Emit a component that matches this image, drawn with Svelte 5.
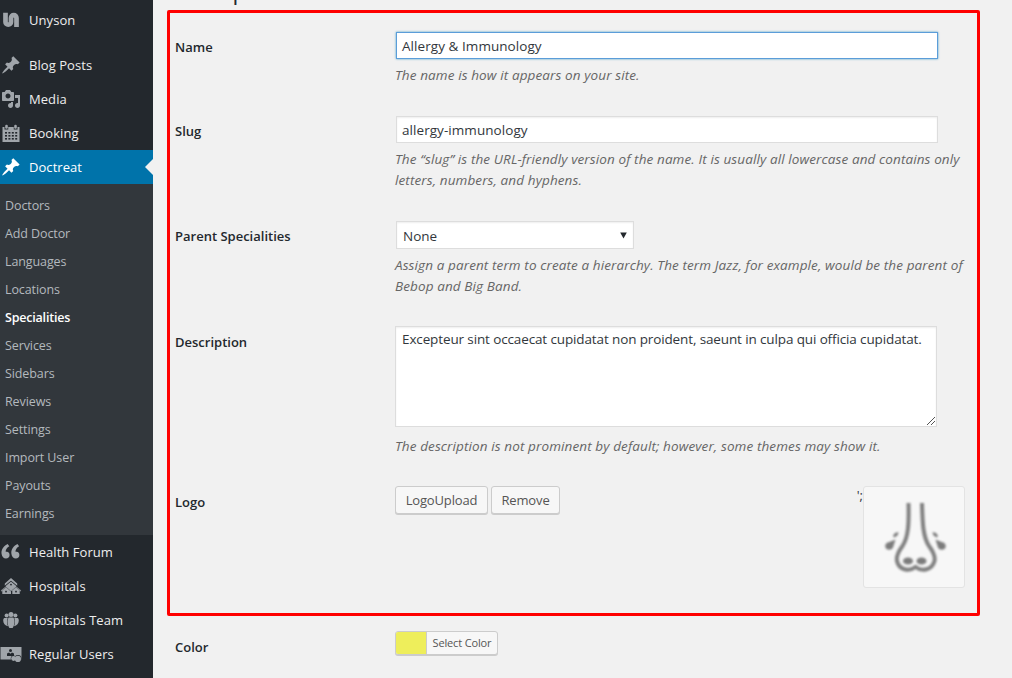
<script>
  const quote = 'M9.49 13.22c0-.74-.2-1.38-.61-1.9-.62-.78-1.83-.88-2.53-.72-.29-1.65 1.11-3.75 2.92-4.65L7.88 4c-2.73 1.3-5.42 4.28-4.96 8.05C3.21 14.43 4.59 16 6.54 16c.85 0 1.56-.25 2.12-.75s.83-1.18.83-2.03zm8.05 0c0-.74-.2-1.38-.61-1.9-.63-.78-1.83-.88-2.53-.72-.29-1.65 1.11-3.75 2.92-4.65L15.93 4c-2.73 1.3-5.41 4.28-4.95 8.05.28 2.38 1.66 3.95 3.61 3.95.85 0 1.56-.25 2.12-.75s.83-1.18.83-2.03z';
  const pin = 'M10.44 3.02l1.82-1.82 6.36 6.35-1.83 1.82c-1.05-.68-2.48-.57-3.41.36l-.75.75c-.92.93-1.04 2.35-.35 3.41l-1.83 1.82-2.41-2.41-2.8 2.79c-.42.42-3.38 2.71-3.8 2.29s1.86-3.39 2.28-3.81l2.79-2.79L4.1 9.36l1.83-1.82c1.05.69 2.48.57 3.4-.36l.75-.75c.93-.92 1.05-2.35.36-3.41z';
  const media = 'M13 11V4c0-.55-.45-1-1-1h-1.67L9 1H5L3.67 3H2c-.55 0-1 .45-1 1v7c0 .55.45 1 1 1h10c.55 0 1-.45 1-1zM7 4.5c1.38 0 2.5 1.12 2.5 2.5S8.38 9.5 7 9.5 4.5 8.38 4.5 7 5.62 4.5 7 4.5zM14 6h5v10.5c0 1.38-1.12 2.5-2.5 2.5S14 17.88 14 16.5s1.12-2.5 2.5-2.5c.17 0 .34.02.5.05V9h-3V6zm-4 8.05V13h2v3.5c0 1.38-1.12 2.5-2.5 2.5S7 17.88 7 16.5 8.12 14 9.5 14c.17 0 .34.02.5.05z';
  const top = [['unyson', 'Unyson'], ['pin', 'Blog Posts'], ['media', 'Media'], ['calendar', 'Booking'], ['pin', 'Doctreat']];
  const bottom = [['quote', 'Health Forum'], ['houses', 'Hospitals'], ['team', 'Hospitals Team'], ['users', 'Regular Users']];
  const sub = ['Doctors', 'Add Doctor', 'Languages', 'Locations', 'Specialities', 'Services', 'Sidebars', 'Reviews', 'Settings', 'Import User', 'Payouts', 'Earnings'];
</script>

{#snippet icon(name)}
  <svg class="icon" width="24" height="34" viewBox="0 0 24 34" fill="currentColor" aria-hidden="true">
    {#if name === 'unyson'}
      <path d="M5.500 9.700v9.200a2.750 2.750 0 0 0 5.500 0v-4a2.750 2.750 0 0 1 5.500 0V24" fill="none" stroke="currentColor" stroke-width="4.700" />
    {:else if name === 'pin'}
      <path transform="translate(1 7)" d={pin} />
    {:else if name === 'media'}
      <path transform="translate(1 7)" d={media} />
    {:else if name === 'calendar'}
      <path d="M2.500 11h2v2.500h4V11h5v2.500h4V11h2v15h-17z" />
      <rect x="5.200" y="8.700" width="2.600" height="4" rx="1.200" />
      <rect x="14.200" y="8.700" width="2.600" height="4" rx="1.200" />
      <rect x="8.500" y="11" width="5" height="3" />
      <g fill="#23282d">
        {#each [16, 19, 22] as y}
          {#each [5, 8.4, 11.8, 15.2] as x}
            <rect {x} {y} width="2" height="1.600" />
          {/each}
        {/each}
      </g>
    {:else if name === 'quote'}
      <path transform="translate(-2 4.200) scale(1.220 1.200)" d={quote} />
    {:else if name === 'houses'}
      <path d="M11 9l6.200 5.600v2.200L11 11.800l-6.200 5v-2.200z" />
      <path d="M11 12.400l5 4.200v2.400L11 22l-5-3v-2.400z" />
      <path d="M6 17.200l5 4 5-4 5.200 4.300-.8 1.100-.7-.5V25h-7.400v-3l-1.300 0V25H2.300v-2.900l-.7.5-.8-1.100z" />
      <g fill="#23282d">
        <circle cx="11" cy="15.600" r=".9" />
        <rect x="5.200" y="21.800" width="1.600" height="1.600" />
        <rect x="15.200" y="21.800" width="1.600" height="1.600" />
      </g>
      <path d="M1.400 21.800L6 18.200l5 4 5-4 4.600 3.600M4.800 17.400L11 12.200l6.200 5.200" fill="none" stroke="#23282d" stroke-width=".4" />
    {:else if name === 'team'}
      <circle cx="6.600" cy="12.500" r="2" />
      <circle cx="15.400" cy="12.500" r="2" />
      <circle cx="11" cy="11.500" r="2.500" />
      <path d="M4.200 15h3.500c-1.100 2.600-.9 5.500.3 8.300C5 22.800 3.200 20.500 3.200 17.500c0-1.200.3-2.100 1-2.500zM17.800 15h-3.500c1.100 2.600.9 5.500-.3 8.300 2.900-.5 4.800-2.800 4.800-5.800 0-1.200-.3-2.100-1-2.500z" />
      <path d="M8.600 14.600h4.800c1.900 3 1.300 7.400-.8 10.400H9.400C7.300 22 6.700 17.600 8.600 14.600z" />
    {:else}
      <path d="M.5 10h21v12.500H.5z" />
      <g fill="#23282d">
        <circle cx="10.500" cy="13.500" r="1.500" />
        <path d="M7 19v-2.500l2-1 1.500 1.300 1.500-1.300 2 1V19z" />
        <circle cx="13.600" cy="21.300" r="2.800" />
        <circle cx="18" cy="21.500" r="3.600" />
      </g>
      <circle cx="13.600" cy="21.500" r="2.400" />
      <circle cx="17.900" cy="21.900" r="3.100" />
    {/if}
  </svg>
{/snippet}

<div class="page">
  <nav class="sidebar">
    {#each top as [name, label], i}
      <a class="item" class:first={i === 0} class:active={i === 4}>{@render icon(name)}<span>{label}</span></a>
    {/each}
    <div class="sub">
      {#each sub as label}
        <a class:current={label === 'Specialities'}>{label}</a>
      {/each}
    </div>
    {#each bottom as [name, label]}
      <a class="item">{@render icon(name)}<span>{label}</span></a>
    {/each}
  </nav>

  <main>
    <h1>Edit Specialities</h1>
    <div class="row name">
      <div class="label">Name</div>
      <div>
        <div class="input focus">Allergy &amp; Immunology</div>
        <p>The name is how it appears on your site.</p>
      </div>
    </div>
    <div class="row slug">
      <div class="label">Slug</div>
      <div>
        <div class="input">allergy-immunology</div>
        <p>The “slug” is the URL-friendly version of the name. It is usually all lowercase and contains only<br />letters, numbers, and hyphens.</p>
      </div>
    </div>
    <div class="row parent">
      <div class="label">Parent Specialities</div>
      <div>
        <div class="input select"><span>None</span>
          <svg width="7" height="7" viewBox="0 0 7 7"><path d="M.2.5h6.600L3.500 6.500z" fill="#23282d" /></svg>
        </div>
        <p>Assign a parent term to create a hierarchy. The term Jazz, for example, would be the parent of<br />Bebop and Big Band.</p>
      </div>
    </div>
    <div class="row desc">
      <div class="label">Description</div>
      <div>
        <div class="input area"><span>Excepteur sint occaecat cupidatat non proident, saeunt in culpa qui officia cupidatat.</span>
          <svg width="10" height="10" viewBox="0 0 10 10"><path d="M1 9l8-8M5 9l4-4" stroke="#555" stroke-width="1" fill="none" /></svg>
        </div>
        <p>The description is not prominent by default; however, some themes may show it.</p>
      </div>
    </div>
    <div class="row logo">
      <div class="label">Logo</div>
      <div class="upload">
        <span class="btn up">LogoUpload</span>
        <span class="btn rm">Remove</span>
        <span class="stray">';</span>
        <div class="preview">
          <svg width="100" height="100" viewBox="0 0 100 100" fill="none" stroke="#808080" stroke-width="4">
            <path d="M44.500 16C45 36 44.500 50 38.500 59C34 65 32 69 33 74C35 83 45 85 51.500 80C58 85 68 83 70.500 74C71.500 69 69.500 65 65 59C59 50 58.500 36 58 16" />
            <g fill="#7c7c7c" stroke="none">
              <ellipse cx="44" cy="74" rx="5" ry="3.600" />
              <ellipse cx="57.500" cy="74" rx="5" ry="3.600" />
              <path d="M31.500 52.500l-2 6.500c-1 5.500-8 4.500-8.200.5-.2-3 2-4 4-4.500z" />
              <path d="M71.500 52.500l2 6.500c1 5.500 8 4.500 8.200.5.2-3-2-4-4-4.500z" />
              <path d="M34.500 45l-.8 3.200-3.200 2.300-1.700-1.500 2.200-3z" />
              <path d="M68.500 45l.8 3.200 3.200 2.300 1.700-1.500-2.200-3z" />
            </g>
          </svg>
        </div>
      </div>
    </div>
    <div class="row color">
      <div class="label">Color</div>
      <div><div class="picker"><i></i><span>Select Color</span></div></div>
    </div>
  </main>
  <div class="highlight"></div>
</div>

<style>
  :global(body) { background: #f1f1f1; overflow: hidden; }
  .page {
    position: relative; display: flex; width: 1012px; height: 678px; overflow: hidden;
    background: #f1f1f1; color: #32373c; font: 13px/20px "Open Sans", "Noto Sans", sans-serif;
  }
  .sidebar { width: 153px; flex: none; background: #23282d; padding-top: 3px; box-sizing: border-box; }
  .item { display: flex; height: 34px; line-height: 34px; color: #eee; white-space: nowrap; letter-spacing: .06px; }
  .item .icon { color: #a0a5aa; flex: none; margin-right: 5px; }
  .item.first { margin-bottom: 11px; }
  .item.active { background: #0073aa; color: #fff; position: relative; }
  .item.active .icon { color: #fff; }
  .item.active::after {
    content: ""; position: absolute; right: 0; top: 9px;
    border: 8px solid transparent; border-left: 0; border-right-color: #f1f1f1;
  }
  .sub { background: #32373c; padding: 8px 5px 7px; }
  .sub a { display: block; height: 28px; line-height: 28px; font-size: 12.5px; letter-spacing: -.1px; color: #b4b9be; }
  .sub a.current { color: #fff; font-weight: 600; letter-spacing: -.2px; }
  main { flex: 1; padding-left: 22px; }
  h1 { margin: -25px 0 0 -2px; height: 57px; font-size: 23px; font-weight: 400; line-height: 30px; color: #23282d; }
  .row { display: grid; grid-template-columns: 220px 590px; }
  .name { height: 84px; }
  .slug, .parent { height: 105px; }
  .desc { height: 160px; }
  .logo { height: 145px; }
  .label { font-weight: 600; color: #23282d; padding-top: 5px; }
  .desc .label, .logo .label, .color .label { padding-top: 6px; }
  .input {
    width: 542px; height: 27px; box-sizing: border-box; border: 1px solid #ddd; background: #fff;
    margin-left: 1px; padding-left: 5px; line-height: 26px; font-size: 13.5px; letter-spacing: .06px; white-space: nowrap;
    box-shadow: inset 0 1px 2px rgba(0, 0, 0, .07);
  }
  .focus { border-color: #5b9dd9; box-shadow: 0 0 2px rgba(30, 140, 190, .8); }
  .select { width: 238px; height: 28px; padding: 0 6px; display: flex; justify-content: space-between; line-height: 28px; letter-spacing: 0; }
  .select svg { margin-top: 10px; }
  .area { height: 101px; margin-left: 0; padding-left: 6px; display: flex; justify-content: space-between; line-height: 24px; letter-spacing: -.125px; }
  .area svg { align-self: flex-end; }
  p { margin: 6px 0 0; line-height: 21px; font-size: 13.5px; letter-spacing: .11px; font-style: italic; color: #666; white-space: nowrap; }
  .desc p { margin-top: 9px; }
  .upload { display: flex; align-items: flex-start; }
  .btn {
    height: 28px; line-height: 27px; box-sizing: border-box; border: 1px solid #ccc; border-radius: 3px;
    background: #f7f7f7; box-shadow: 0 1px 0 #ccc; color: #555; text-align: center; letter-spacing: -.15px;
  }
  .up { width: 93px; margin-right: 3px; }
  .rm { width: 69px; }
  .stray { margin-left: auto; line-height: 18px; }
  .preview { width: 100px; height: 100px; border: 1px solid #e3e3e3; border-radius: 3px; background: #f7f7f7; margin-right: 20px; }
  .preview svg { display: block; filter: blur(.8px); }
  .picker {
    display: flex; width: 103px; height: 24px; box-sizing: border-box; border: 1px solid #ccc; border-radius: 3px;
    box-shadow: 0 1px 0 #ccc; background: #f7f7f7; color: #555; overflow: hidden; font-size: 11px; line-height: 22px; letter-spacing: -.15px;
  }
  .picker i { width: 30px; background: #eeee5b; border-right: 1px solid #ccc; }
  .picker span { flex: 1; text-align: center; white-space: nowrap; }
  .highlight { position: absolute; left: 167px; top: 10px; width: 807px; height: 600px; border: 3px solid #f00; border-radius: 2px; }
</style>
